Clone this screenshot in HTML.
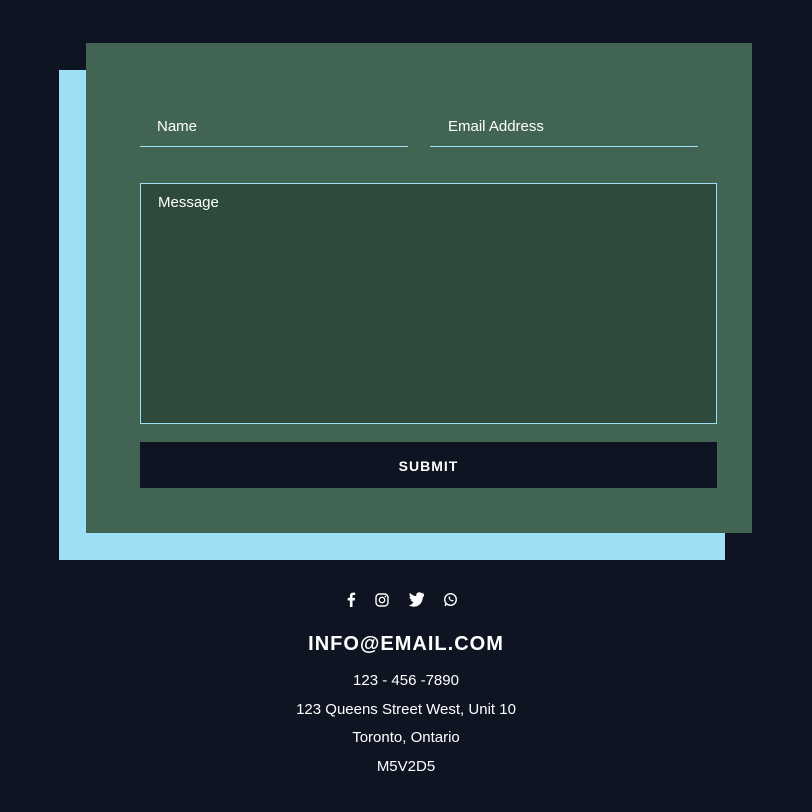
<!DOCTYPE html>
<html><head><style>
*{margin:0;padding:0;box-sizing:border-box}
body{width:812px;height:812px;background:#0f1423;font-family:"Liberation Sans",sans-serif;position:relative;overflow:hidden;color:#fff}
.blue{position:absolute;left:59px;top:70px;width:666px;height:490px;background:#9ddff5}
.green{position:absolute;left:86px;top:43px;width:666px;height:490px;background:#426553}
.in{position:absolute;color:#fff;font-size:15px}
.line{position:absolute;height:1px;background:#9ddff5}
.msg{position:absolute;left:140px;top:183px;width:577px;height:241px;background:#2d4a3c;border:1px solid #9ddff5}
.btn{position:absolute;left:140px;top:442px;width:577px;height:46px;background:#0f1423;color:#fff;font-weight:bold;font-size:14px;letter-spacing:1px;text-align:center;line-height:48px}
.c{position:absolute;left:0;width:812px;text-align:center;font-size:15px}
</style></head><body>
<div class="blue"></div>
<div class="green"></div>
<div class="in" style="left:157px;top:118px">Name</div>
<div class="line" style="left:140px;top:146px;width:268px"></div>
<div class="in" style="left:448px;top:118px">Email Address</div>
<div class="line" style="left:430px;top:146px;width:268px"></div>
<div class="msg"><div class="in" style="left:17px;top:10px">Message</div></div>
<div class="btn">SUBMIT</div>
<svg style="position:absolute;left:341px;top:590px" width="130" height="20" viewBox="0 0 130 20">
<path d="M11.5 17V10.5h2.2l.4-2.6h-2.6V6.3c0-.8.3-1.3 1.4-1.3h1.3V2.7c-.3 0-1.1-.1-2-.1-2 0-3.300 1.200-3.300 3.400V7.9H6.700v2.600h2.200V17z" fill="#fff"/>
<rect x="35" y="4" width="12" height="12" rx="3.5" fill="none" stroke="#fff" stroke-width="1.4"/>
<circle cx="41" cy="10" r="2.7" fill="none" stroke="#fff" stroke-width="1.4"/>
<circle cx="44.4" cy="6.6" r=".8" fill="#fff"/>
<path d="M83 5.2c-.6.3-1.200.4-1.800.5.700-.4 1.100-1 1.400-1.700-.6.400-1.300.6-2 .8a3.100 3.100 0 0 0-5.300 2.800c-2.600-.1-4.900-1.400-6.400-3.200-.8 1.400-.4 3.200 1 4.100-.5 0-1-.2-1.400-.4 0 1.500 1.100 2.800 2.500 3.100-.5.1-1 .2-1.400.1.400 1.200 1.600 2.100 2.900 2.200A6.300 6.300 0 0 1 68 16.800c1.400.9 3 1.400 4.800 1.400 5.800 0 9-4.900 8.900-9.200.6-.5 1.100-1 1.300-1.800z" fill="#fff" transform="translate(0,-1.500)"/>
<circle cx="109.5" cy="9.5" r="5.8" fill="none" stroke="#fff" stroke-width="1.4"/>
<path d="M104.200 16l.9-3" stroke="#fff" stroke-width="1.4"/>
<path d="M107.500 7c0 2.500 2 4.500 4.500 4.500l.7-1.200-1.300-.6-.6.600c-.9-.4-1.600-1.100-2-2l.6-.6-.6-1.300z" fill="#fff"/>
</svg>
<div class="c" style="top:633px;font-size:20px;font-weight:bold;letter-spacing:1px">INFO@EMAIL.COM</div>
<div class="c" style="top:672px">123 - 456 -7890</div>
<div class="c" style="top:701px">123 Queens Street West, Unit 10</div>
<div class="c" style="top:729px">Toronto, Ontario</div>
<div class="c" style="top:758px">M5V2D5</div>
</body></html>
